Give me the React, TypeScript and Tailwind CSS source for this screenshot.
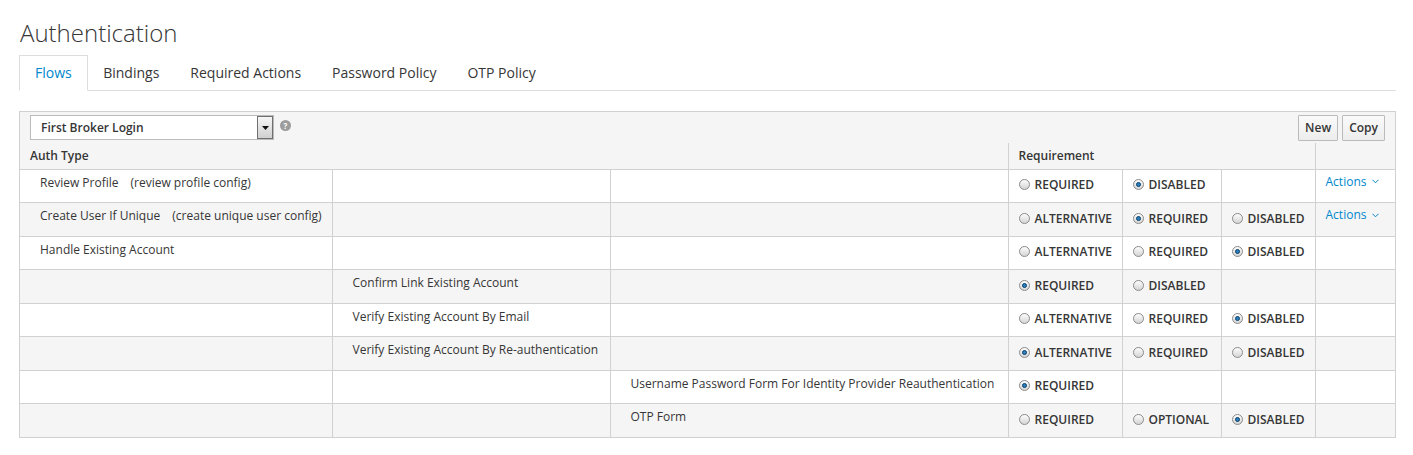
import React from "react";

type Req = { label: string; checked?: boolean } | null;

type Row = {
  level: 0 | 1 | 2;
  name: string;
  config?: string;
  reqs: Req[];
  actions?: boolean;
};

const ROWS: Row[] = [
  {
    level: 0,
    name: "Review Profile",
    config: "(review profile config)",
    reqs: [{ label: "REQUIRED" }, { label: "DISABLED", checked: true }, null],
    actions: true,
  },
  {
    level: 0,
    name: "Create User If Unique",
    config: "(create unique user config)",
    reqs: [{ label: "ALTERNATIVE" }, { label: "REQUIRED", checked: true }, { label: "DISABLED" }],
    actions: true,
  },
  {
    level: 0,
    name: "Handle Existing Account",
    reqs: [{ label: "ALTERNATIVE" }, { label: "REQUIRED" }, { label: "DISABLED", checked: true }],
  },
  {
    level: 1,
    name: "Confirm Link Existing Account",
    reqs: [{ label: "REQUIRED", checked: true }, { label: "DISABLED" }, null],
  },
  {
    level: 1,
    name: "Verify Existing Account By Email",
    reqs: [{ label: "ALTERNATIVE" }, { label: "REQUIRED" }, { label: "DISABLED", checked: true }],
  },
  {
    level: 1,
    name: "Verify Existing Account By Re-authentication",
    reqs: [{ label: "ALTERNATIVE", checked: true }, { label: "REQUIRED" }, { label: "DISABLED" }],
  },
  {
    level: 2,
    name: "Username Password Form For Identity Provider Reauthentication",
    reqs: [{ label: "REQUIRED", checked: true }, null, null],
  },
  {
    level: 2,
    name: "OTP Form",
    reqs: [{ label: "REQUIRED" }, { label: "OPTIONAL" }, { label: "DISABLED", checked: true }],
  },
];

const TABS = ["Flows", "Bindings", "Required Actions", "Password Policy", "OTP Policy"];

function Radio({ checked }: { checked?: boolean }) {
  return (
    <span className="relative inline-flex h-[11px] w-[11px] shrink-0 items-center justify-center rounded-full border border-[#8c8c8c] bg-gradient-to-b from-[#fdfdfd] to-[#d4d4d4]">
      {checked && (
        <span className="h-[5px] w-[5px] rounded-full border border-[#0b3f66] bg-[#2a7fc0]" />
      )}
    </span>
  );
}

function ReqCell({ req }: { req: Req }) {
  return (
    <td className="border border-[#d1d1d1] px-[10px] pb-[2px] align-middle">
      {req && (
        <label className="flex items-center gap-[5px] whitespace-nowrap text-[12px] font-semibold text-[#363636]">
          <Radio checked={req.checked} />
          <span className="pt-[1px]">{req.label}</span>
        </label>
      )}
    </td>
  );
}

function NameCell({ show, row }: { show: boolean; row: Row }) {
  return (
    <td className="overflow-hidden whitespace-nowrap border border-[#d1d1d1] pl-[20px] pr-[10px] pt-[4px] align-top text-[12px] text-[#363636]">
      {show && (
        <span>
          {row.name}
          {row.config && <span className="ml-[12px]">{row.config}</span>}
        </span>
      )}
    </td>
  );
}

export default function App() {
  return (
    <div
      className="min-h-[455px] bg-white pl-[19px] pr-[17px] text-[#363636]"
      style={{ fontFamily: '"Open Sans", "Noto Sans", sans-serif' }}
    >
      <h1 className="pl-px pt-[17px] text-[24px] font-light leading-[32px] text-[#363636]">
        Authentication
      </h1>

      <ul className="mt-[6px] flex border-b border-[#dddddd]">
        {TABS.map((t, i) => (
          <li
            key={t}
            className={
              i === 0
                ? "-mb-px h-[36px] border border-b-white border-[#dddddd] bg-white px-[15px] pt-[6px] text-[14px] text-[#0088ce]"
                : "h-[35px] border border-transparent px-[14.5px] pt-[6px] text-[14px] text-[#363636]"
            }
          >
            {t}
          </li>
        ))}
      </ul>

      <div className="mt-[20px] border border-[#d1d1d1]">
        <div className="flex h-[31px] items-center justify-between bg-[#f5f5f5] pl-[10px] pr-[10px]">
          <div className="flex items-center gap-[6px]">
            <div className="flex h-[25px] w-[244px] items-center border border-[#bbbbbb] bg-white">
              <span className="flex-1 pl-[10px] text-[12px] font-semibold text-[#363636]">
                First Broker Login
              </span>
              <span className="flex h-[23px] w-[16px] items-center justify-center border border-[#707070] bg-gradient-to-b from-[#f6f6f6] to-[#d0d0d0]">
                <svg width="7" height="4" viewBox="0 0 7 4">
                  <path d="M0 0h7L3.5 4z" fill="#111" />
                </svg>
              </span>
            </div>
            <span className="-mt-[4px] flex h-[11px] w-[11px] items-center justify-center rounded-full bg-[#9c9c9c] text-[8px] font-bold leading-none text-white">
              ?
            </span>
          </div>
          <div className="flex gap-[4px]">
            <button className="h-[26px] rounded-[1px] border border-[#bbbbbb] bg-gradient-to-b from-[#fafafa] to-[#ededed] px-[6px] text-[12px] font-semibold text-[#363636]">
              New
            </button>
            <button className="h-[26px] rounded-[1px] border border-[#bbbbbb] bg-gradient-to-b from-[#fafafa] to-[#ededed] px-[6px] text-[12px] font-semibold text-[#363636]">
              Copy
            </button>
          </div>
        </div>

        <table className="w-full table-fixed border-collapse border-hidden">
          <colgroup>
            <col className="w-[312px]" />
            <col className="w-[278px]" />
            <col className="w-[398px]" />
            <col className="w-[114px]" />
            <col className="w-[99px]" />
            <col className="w-[94px]" />
            <col />
          </colgroup>
          <thead>
            <tr className="h-[26px] bg-[#f5f5f5]">
              <th colSpan={3} className="border border-[#d1d1d1] px-[10px] text-left text-[12px] font-semibold text-[#363636]">
                Auth Type
              </th>
              <th colSpan={3} className="border border-[#d1d1d1] px-[10px] text-left text-[12px] font-semibold text-[#363636]">
                Requirement
              </th>
              <th className="border border-[#d1d1d1]" />
            </tr>
          </thead>
          <tbody>
            {ROWS.map((row, i) => (
              <tr
                key={row.name}
                className={i % 2 === 0 ? "h-[33.5px] bg-white" : "h-[33.5px] bg-[#f5f5f5]"}
              >
                <NameCell show={row.level === 0} row={row} />
                <NameCell show={row.level === 1} row={row} />
                <NameCell show={row.level === 2} row={row} />
                {row.reqs.map((r, j) => (
                  <ReqCell key={j} req={r} />
                ))}
                <td className="border border-[#d1d1d1] px-[10px] pt-[3px] align-top">
                  {row.actions && (
                    <span className="flex items-center gap-[6px] text-[12px] text-[#0088ce]">
                      Actions
                      <svg width="7" height="5" viewBox="0 0 7 5" fill="none">
                        <path d="M0.5 0.8L3.5 3.8L6.5 0.8" stroke="#0088ce" strokeWidth="1" />
                      </svg>
                    </span>
                  )}
                </td>
              </tr>
            ))}
          </tbody>
        </table>
      </div>
    </div>
  );
}
